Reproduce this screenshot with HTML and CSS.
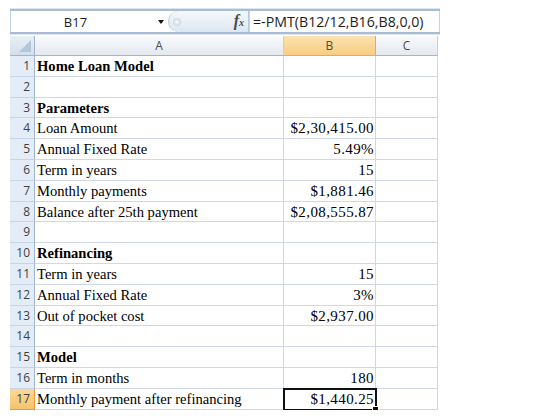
FILE: index.html
```html
<!DOCTYPE html>
<html lang="en">
<head>
    <meta charset="UTF-8">
    <title>Home Loan Model</title>
    <link rel="stylesheet" href="styles.css">
</head>
<body>
    <div class="sheet">
        <div class="formulabar">
            <div class="namebox">
                <span class="cellref">B17</span>
                <span class="arrow"></span>
            </div>
            <div class="pill">
                <span class="knob"></span>
                <span class="fx">f<sub>x</sub></span>
            </div>
            <div class="formula">=-PMT(B12/12,B16,B8,0,0)</div>
        </div>

        <div class="grid">
            <div class="corner"><span class="tri"></span></div>
            <div class="colhead">A</div>
            <div class="colhead active">B</div>
            <div class="colhead">C</div>

            <div class="rowhead">1</div><div class="cell bold">Home Loan Model</div><div class="cell num"></div><div class="cell"></div>
            <div class="rowhead">2</div><div class="cell"></div><div class="cell num"></div><div class="cell"></div>
            <div class="rowhead">3</div><div class="cell bold">Parameters</div><div class="cell num"></div><div class="cell"></div>
            <div class="rowhead">4</div><div class="cell">Loan Amount</div><div class="cell num">$2,30,415.00</div><div class="cell"></div>
            <div class="rowhead">5</div><div class="cell">Annual Fixed Rate</div><div class="cell num">5.49%</div><div class="cell"></div>
            <div class="rowhead">6</div><div class="cell">Term in years</div><div class="cell num">15</div><div class="cell"></div>
            <div class="rowhead">7</div><div class="cell">Monthly payments</div><div class="cell num">$1,881.46</div><div class="cell"></div>
            <div class="rowhead">8</div><div class="cell">Balance after 25th payment</div><div class="cell num">$2,08,555.87</div><div class="cell"></div>
            <div class="rowhead">9</div><div class="cell"></div><div class="cell num"></div><div class="cell"></div>
            <div class="rowhead">10</div><div class="cell bold">Refinancing</div><div class="cell num"></div><div class="cell"></div>
            <div class="rowhead">11</div><div class="cell">Term in years</div><div class="cell num">15</div><div class="cell"></div>
            <div class="rowhead">12</div><div class="cell">Annual Fixed Rate</div><div class="cell num">3%</div><div class="cell"></div>
            <div class="rowhead">13</div><div class="cell">Out of pocket cost</div><div class="cell num">$2,937.00</div><div class="cell"></div>
            <div class="rowhead">14</div><div class="cell"></div><div class="cell num"></div><div class="cell"></div>
            <div class="rowhead">15</div><div class="cell bold">Model</div><div class="cell num"></div><div class="cell"></div>
            <div class="rowhead">16</div><div class="cell">Term in months</div><div class="cell num">180</div><div class="cell"></div>
            <div class="rowhead active">17</div><div class="cell">Monthly payment after refinancing</div><div class="cell num selected">$1,440.25<span class="handle"></span></div><div class="cell"></div>
        </div>
    </div>
</body>
</html>
```

FILE: styles.css
```css
html, body {
    margin: 0;
    padding: 0;
    background: #ffffff;
}
.sheet {
    padding: 9px 0 0 10px;
    width: 430px;
}
.formulabar {
    display: flex;
    height: 21px;
    border-top: 2px solid #a9bcd4;
    border-bottom: 2px solid #a9bcd4;
    box-shadow: 0 1px 0 #dce6f2, 0 -1px 0 #dce6f2;
    font-family: "Open Sans", "Liberation Sans", sans-serif;
    font-size: 12px;
    color: #1e1e1e;
    background: #ffffff;
}
.namebox {
    width: 157px;
    display: flex;
    align-items: center;
    border-left: 1px solid #c5d3e3;
}
.cellref {
    flex: 1;
    text-align: center;
    padding-right: 18px;
    font-size: 13px;
}
.arrow {
    width: 0;
    height: 0;
    border-left: 3px solid transparent;
    border-right: 3px solid transparent;
    border-top: 4px solid #111;
    margin-right: 4px;
}
.pill {
    width: 81px;
    display: flex;
    align-items: center;
    justify-content: space-between;
    background: linear-gradient(#f4f8fc, #dde7f2);
    border-radius: 11px 0 0 11px;
    border: 1px solid #b7c9de;
    border-top: none;
    border-bottom: none;
    box-sizing: border-box;
    padding: 0 4px 0 4px;
}
.knob {
    width: 8px;
    height: 8px;
    border-radius: 50%;
    background: radial-gradient(#ffffff, #b8c5d4);
}
.fx {
    font-family: "Liberation Serif", serif;
    font-style: italic;
    font-weight: bold;
    font-size: 16px;
    line-height: 16px;
    color: #4a4a4a;
}
.fx sub {
    font-size: 10px;
    vertical-align: 0;
}
.formula {
    flex: 1;
    padding-left: 3px;
    line-height: 21px;
    font-size: 14.2px;
    border-left: 1px solid #c5d3e3;
    border-right: 1px solid #c5d3e3;
}
.grid {
    display: grid;
    grid-template-columns: 25px 249px 92px 62px;
    grid-auto-rows: 20.8px;
    grid-template-rows: 20px;
    margin-top: 2px;
    width: 428px;
    font-family: "Liberation Serif", serif;
    font-size: 14.6px;
    color: #000;
}
.corner {
    background: linear-gradient(#e9eff7, #d4deea);
    border-right: 1px solid #9eb6ce;
    border-bottom: 1px solid #9eb6ce;
    position: relative;
}
.tri {
    position: absolute;
    right: 3px;
    bottom: 3px;
    width: 0;
    height: 0;
    border-left: 12px solid transparent;
    border-bottom: 12px solid #b4c6db;
}
.colhead {
    background: linear-gradient(#f9fafc, #e4e9f0);
    border-right: 1px solid #c4d1e0;
    border-bottom: 1px solid #9eb6ce;
    text-align: center;
    font-family: "Open Sans", "Liberation Sans", sans-serif;
    font-size: 12px;
    line-height: 19px;
    color: #4c4c4c;
}
.colhead.active {
    background: linear-gradient(#fbe2b0, #f8cd80);
    border-right-color: #f2a74a;
    border-bottom-color: #f2a74a;
}
.rowhead {
    background: #e4ecf7;
    border-right: 1px solid #9eb6ce;
    border-bottom: 1px solid #c5d4e6;
    box-sizing: border-box;
    text-align: right;
    padding-right: 4px;
    font-family: "Open Sans", "Liberation Sans", sans-serif;
    font-size: 12px;
    line-height: 20px;
    color: #3f3f3f;
}
.rowhead.active {
    background: linear-gradient(#fbd899, #f6c36d);
    border-right-color: #f29436;
    border-bottom-color: #f29436;
}
.cell {
    border-right: 1px solid #d0d7e5;
    border-bottom: 1px solid #d0d7e5;
    box-sizing: border-box;
    padding: 0 2px;
    line-height: 20px;
    white-space: nowrap;
}
.bold {
    font-weight: bold;
}
.num {
    text-align: right;
    font-size: 15px;
    letter-spacing: 0.4px;
    padding-right: 1px;
}
.selected {
    position: relative;
    outline: 2px solid #111;
    outline-offset: -1px;
}
.handle {
    position: absolute;
    right: -4px;
    bottom: -4px;
    width: 5px;
    height: 5px;
    background: #111;
    border: 1px solid #fff;
}
```
